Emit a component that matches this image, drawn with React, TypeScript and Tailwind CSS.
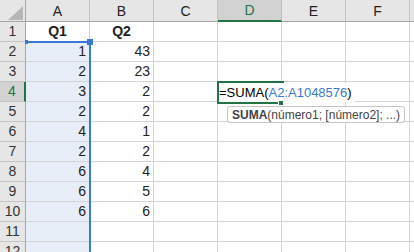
import React from 'react';

const columns = ['A', 'B', 'C', 'D', 'E', 'F'];

// values per row: [A, B]
const rows: [string, string][] = [
  ['Q1', 'Q2'],
  ['1', '43'],
  ['2', '23'],
  ['3', '2'],
  ['2', '2'],
  ['4', '1'],
  ['2', '2'],
  ['6', '4'],
  ['6', '5'],
  ['6', '6'],
  ['', ''],
  ['', ''],
];

const App = () => {
  return (
    <div className="relative w-[414px] h-[252px] overflow-hidden bg-white font-['Liberation_Sans',Arial,sans-serif] text-[14px] text-[#222]">
      <div className="grid grid-cols-[26px_repeat(6,64px)_1fr] grid-rows-[22px_repeat(12,20px)]">
        {/* corner */}
        <div className="relative bg-[#e6e6e6] border-r border-b border-[#a6a6a6]">
          <svg className="absolute left-[8px] top-[6px]" width="15" height="14" viewBox="0 0 15 14">
            <polygon points="15,0 15,14 0,14" fill="#b6b6b6" />
          </svg>
        </div>

        {/* column headers */}
        {columns.map((c) =>
          c === 'D' ? (
            <div
              key={c}
              className="flex items-center justify-center bg-[#d2d2d2] border-r border-r-[#bdbdbd] border-b-2 border-b-[#217346] text-[#217346] pt-[1px]"
            >
              {c}
            </div>
          ) : (
            <div
              key={c}
              className="flex items-center justify-center bg-[#e6e6e6] border-r border-r-[#c4c4c4] border-b border-b-[#a6a6a6] pt-[1px]"
            >
              {c}
            </div>
          )
        )}
        <div className="bg-[#e6e6e6] border-b border-[#a6a6a6]" />

        {rows.map((r, i) => {
          const n = i + 1;
          const header = n === 4;
          return (
            <React.Fragment key={n}>
              <div
                className={
                  header
                    ? 'flex items-center justify-center bg-[#d2d2d2] border-r-2 border-r-[#217346] border-b border-b-[#c4c4c4] text-[#217346]'
                    : 'flex items-center justify-center bg-[#e6e6e6] border-r border-r-[#a6a6a6] border-b border-b-[#c4c4c4] text-[#333]'
                }
              >
                {n}
              </div>
              <div
                className={
                  n === 1
                    ? 'flex items-center justify-center font-bold border-r border-b border-[#d4d4d4]'
                    : 'flex items-center justify-end pr-[3px] bg-[#e7eef8] border-r border-b border-[#d4d4d4]'
                }
              >
                {r[0]}
              </div>
              <div
                className={
                  n === 1
                    ? 'flex items-center justify-center font-bold border-r border-b border-[#d4d4d4]'
                    : 'flex items-center justify-end pr-[3px] border-r border-b border-[#d4d4d4]'
                }
              >
                {r[1]}
              </div>
              <div className="border-r border-b border-[#d4d4d4]" />
              <div className="border-r border-b border-[#d4d4d4]" />
              <div className="border-r border-b border-[#d4d4d4]" />
              <div className="border-r border-b border-[#d4d4d4]" />
              <div className="border-b border-[#d4d4d4]" />
            </React.Fragment>
          );
        })}
      </div>

      {/* range reference A2:A1048576 */}
      <div className="absolute left-[26px] top-[41px] w-[65px] h-[2px] bg-[#3c78d2]" />
      <div className="absolute left-[89px] top-[41px] w-[2px] h-[220px] bg-[#3c78d2]" />
      <div className="absolute left-[25px] top-[40px] w-[3px] h-[4px] bg-[#3c78d2]" />
      <div className="absolute left-[87px] top-[39px] w-[6px] h-[6px] bg-[#3c78d2]" />

      {/* active cell D4 */}
      <div className="absolute left-[217px] top-[81px] w-[67px] h-[23px] border-2 border-[#217346]" />
      <div className="absolute left-[219px] top-[83px] h-[19px] flex items-center pr-[3px] bg-white text-black text-[13px]">
        =SUMA(<span className="text-[#3c78d2]">A2:A1048576</span>)
      </div>
      <div className="absolute left-[278px] top-[100px] w-[6px] h-[6px] bg-[#217346] border border-white" />

      {/* function tooltip */}
      <div className="absolute left-[227px] top-[106px] h-[17px] flex items-center px-[4px] bg-white border border-[#c6c6c6] rounded-[3px] text-[12px] text-[#444] leading-none">
        <span className="font-bold">SUMA</span>(número1; [número2]; ...)
      </div>
    </div>
  );
};

export default App;
